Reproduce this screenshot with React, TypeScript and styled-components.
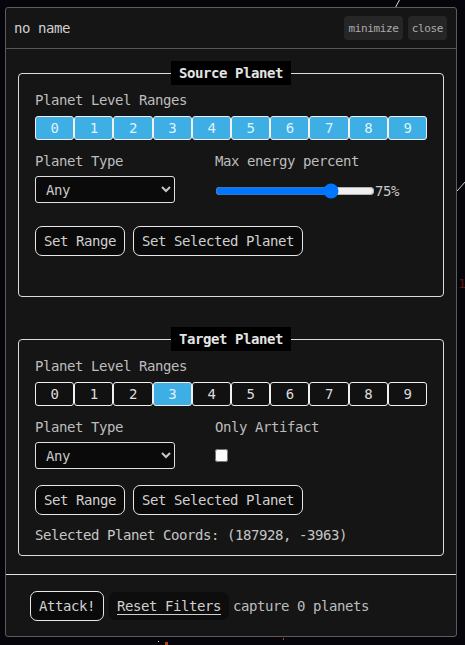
import React, { useState } from "react";
import styled, { createGlobalStyle } from "styled-components";

const GlobalStyle = createGlobalStyle`
  html, body { margin: 0; padding: 0; background: #05050b; }
  body { font-family: "DejaVu Sans Mono", "Liberation Mono", monospace; }
  * { box-sizing: border-box; }
`;

const MONO = `"DejaVu Sans Mono", "Liberation Mono", monospace`;

const Page = styled.div`
  position: relative;
  width: 465px;
  height: 645px;
  overflow: hidden;
  padding: 7px 0 0 5px;
`;

const Backdrop = styled.svg`
  position: absolute;
  inset: 0;
  z-index: 0;
`;

const Window = styled.div`
  position: relative;
  z-index: 1;
  width: 452px;
  height: 630px;
  background: #151515;
  border: 1px solid #5c5c5c;
  border-radius: 3px;
  display: flex;
  flex-direction: column;
  font-family: ${MONO};
  font-size: 14px;
  letter-spacing: -0.43px;
  color: #c4c4c4;
`;

const Header = styled.div`
  height: 41px;
  flex: 0 0 41px;
  border-bottom: 1px solid #555;
  display: flex;
  align-items: center;
  justify-content: space-between;
  padding: 0 9px 0 8px;
`;

const Title = styled.span`
  color: #cfcfcf;
`;

const HeaderButtons = styled.div`
  display: flex;
  gap: 5px;
`;

const HeaderButton = styled.button`
  height: 24px;
  padding: 0 4px;
  border: none;
  border-radius: 4px;
  background: #262626;
  color: #ababab;
  font-family: ${MONO};
  font-size: 11px;
  letter-spacing: -0.35px;
`;

const Body = styled.div`
  flex: 1;
  padding: 12px 12px 18px 12px;
  display: flex;
  flex-direction: column;
  gap: 30px;
`;

const Fieldset = styled.fieldset`
  margin: 0;
  padding: 5px 16px 10px;
  border: 1px solid #dcdcdc;
  border-radius: 4px;
  min-inline-size: 0;
  display: flex;
  flex-direction: column;
  gap: 10px;
`;

const Legend = styled.legend`
  margin: 0 auto;
  padding: 0 8px;
  height: 24px;
  line-height: 24px;
  background: #000;
  color: #e4e4e4;
  font-weight: bold;
  font-size: 14px;
`;

const LevelGroup = styled.div`
  display: flex;
  flex-direction: column;
  gap: 6px;
  margin-bottom: 1px;
`;

const Label = styled.div`
  height: 20px;
  line-height: 20px;
  color: #bdbdbd;
  white-space: nowrap;
`;

const Levels = styled.div`
  display: flex;
  height: 24px;
`;

const LevelButton = styled.button<{ $active: boolean }>`
  flex: 1;
  height: 24px;
  padding: 0;
  border: 1px solid #f0f0f0;
  border-radius: 3px;
  background: ${(p) => (p.$active ? "#3eafe5" : "#111")};
  color: ${(p) => (p.$active ? "#dff3fd" : "#dedede")};
  font-family: ${MONO};
  font-size: 14px;
  letter-spacing: -0.43px;
`;

const Pair = styled.div`
  display: grid;
  grid-template-columns: 180px 1fr;
  align-items: start;
`;

const Column = styled.div`
  display: flex;
  flex-direction: column;
  gap: 5px;
`;

const Select = styled.select`
  width: 140px;
  height: 27px;
  padding: 0 6px;
  background: #0a0a0a;
  color: #c8c8c8;
  border: 1px solid #e0e0e0;
  border-radius: 3px;
  font-family: ${MONO};
  font-size: 14px;
  letter-spacing: -0.43px;
`;

const SliderRow = styled.div`
  height: 40px;
  padding-bottom: 10px;
  display: flex;
  align-items: center;
`;

const Slider = styled.input`
  width: 160px;
  margin: 0;
`;

const Percent = styled.span`
  color: #c8c8c8;
`;

const CheckRow = styled.div`
  height: 33px;
`;

const Check = styled.input`
  margin: 7px 0 0 0;
  width: 13px;
  height: 13px;
`;

const ButtonRow = styled.div`
  display: flex;
  gap: 8px;
`;

const OutlineButton = styled.button`
  height: 30px;
  padding: 0 8px;
  background: #0a0a0a;
  color: #d0d0d0;
  border: 1px solid #e8e8e8;
  border-radius: 7px;
  font-family: ${MONO};
  font-size: 14px;
  letter-spacing: -0.43px;
  white-space: nowrap;
`;

const Coords = styled.div`
  height: 20px;
  line-height: 20px;
  color: #c6c6c6;
`;

const Footer = styled.div`
  flex: 0 0 63px;
  border-top: 1px solid #e0e0e0;
  display: flex;
  align-items: center;
  gap: 5px;
  padding: 0 0 0 24px;
`;

const GhostButton = styled.button`
  height: 28px;
  padding: 0 8px;
  border: none;
  border-radius: 7px;
  background: #0d0d0d;
  color: #cfcfcf;
  text-decoration: underline;
  text-underline-offset: 3px;
  font-family: ${MONO};
  font-size: 14px;
  letter-spacing: -0.43px;
`;

const Status = styled.span`
  color: #bdbdbd;
  margin-left: -1px;
`;

const LEVELS = [0, 1, 2, 3, 4, 5, 6, 7, 8, 9];

function LevelPicker({ active }: { active: (n: number) => boolean }) {
  return (
    <LevelGroup>
      <Label>Planet Level Ranges</Label>
      <Levels>
        {LEVELS.map((n) => (
          <LevelButton key={n} $active={active(n)}>
            {n}
          </LevelButton>
        ))}
      </Levels>
    </LevelGroup>
  );
}

function TypeSelect() {
  return (
    <Column>
      <Label>Planet Type</Label>
      <Select defaultValue="any">
        <option value="any">Any</option>
        <option value="planet">Planet</option>
        <option value="asteroid">Asteroid Field</option>
        <option value="foundry">Foundry</option>
        <option value="spacetime">Spacetime Rip</option>
        <option value="quasar">Quasar</option>
      </Select>
    </Column>
  );
}

export default function App() {
  const [energy, setEnergy] = useState(75);
  return (
    <>
      <GlobalStyle />
      <Page>
        <Backdrop width="465" height="645" viewBox="0 0 465 645">
          <line x1="400" y1="-1" x2="393" y2="12" stroke="#d8d8d8" strokeWidth="1" />
          <line x1="457" y1="191" x2="466" y2="181" stroke="#d8d8d8" strokeWidth="1" />
          <text x="458" y="288" fill="#5a1a1a" fontSize="13" fontFamily="DejaVu Sans Mono">1</text>
          <rect x="158" y="641" width="1" height="1" fill="#ddd" />
          <rect x="165" y="642" width="3" height="3" fill="#c2410c" />
          <rect x="283" y="638" width="1" height="2" fill="#c2410c" />
        </Backdrop>
        <Window>
          <Header>
            <Title>no name</Title>
            <HeaderButtons>
              <HeaderButton>minimize</HeaderButton>
              <HeaderButton>close</HeaderButton>
            </HeaderButtons>
          </Header>
          <Body>
            <Fieldset>
              <Legend>Source Planet</Legend>
              <LevelPicker active={() => true} />
              <Pair>
                <TypeSelect />
                <Column>
                  <Label>Max energy percent</Label>
                  <SliderRow>
                    <Slider
                      type="range"
                      min={0}
                      max={100}
                      value={energy}
                      onChange={(e) => setEnergy(Number(e.target.value))}
                    />
                    <Percent>{energy}%</Percent>
                  </SliderRow>
                </Column>
              </Pair>
              <ButtonRow>
                <OutlineButton>Set Range</OutlineButton>
                <OutlineButton>Set Selected Planet</OutlineButton>
              </ButtonRow>
              <Coords />
            </Fieldset>
            <Fieldset>
              <Legend>Target Planet</Legend>
              <LevelPicker active={(n) => n === 3} />
              <Pair>
                <TypeSelect />
                <Column>
                  <Label>Only Artifact</Label>
                  <CheckRow>
                    <Check type="checkbox" />
                  </CheckRow>
                </Column>
              </Pair>
              <ButtonRow>
                <OutlineButton>Set Range</OutlineButton>
                <OutlineButton>Set Selected Planet</OutlineButton>
              </ButtonRow>
              <Coords>Selected Planet Coords: (187928, -3963)</Coords>
            </Fieldset>
          </Body>
          <Footer>
            <OutlineButton>Attack!</OutlineButton>
            <GhostButton>Reset Filters</GhostButton>
            <Status>capture 0 planets</Status>
          </Footer>
        </Window>
      </Page>
    </>
  );
}
